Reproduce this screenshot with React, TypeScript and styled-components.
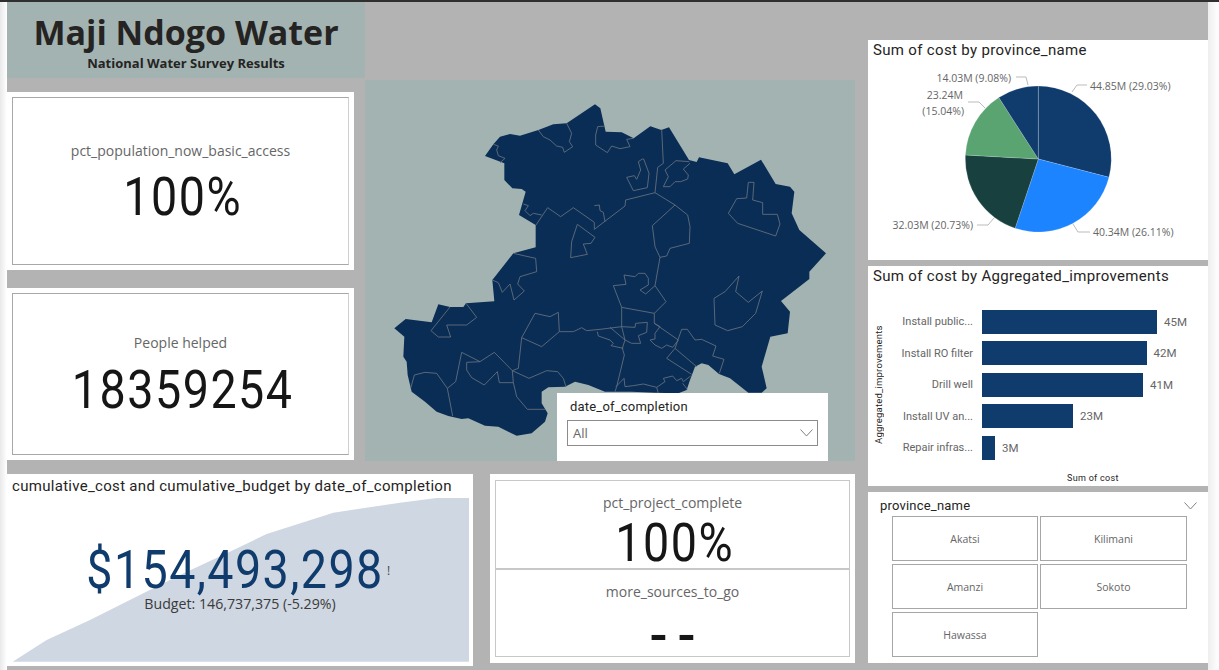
import React from "react"
import styled, { createGlobalStyle } from "styled-components"

const GlobalStyle = createGlobalStyle`
  html, body {
    margin: 0;
    padding: 0;
    background: #fff;
  }
`

const din = `"Roboto", "Liberation Sans", sans-serif`
const segoe = `"Open Sans", "Noto Sans", sans-serif`

const pieData = [
  { pct: 29.03, color: "#0f3b6d" },
  { pct: 26.11, color: "#1c84ff" },
  { pct: 20.73, color: "#18403f" },
  { pct: 15.04, color: "#5aa472" },
  { pct: 9.08, color: "#0f3b6d" },
]

const barData = [
  { label: "Install public...", width: 175, value: "45M" },
  { label: "Install RO filter", width: 164.5, value: "42M" },
  { label: "Drill well", width: 161, value: "41M" },
  { label: "Install UV an...", width: 91, value: "23M" },
  { label: "Repair infras...", width: 13, value: "3M" },
]

const provinces = ["Akatsi", "Kilimani", "Amanzi", "Sokoto", "Hawassa"]

// traced off the reference, units are 1/3 px
const mapOutline =
  "690,73 706,85 722,155 770,157 806,175 856,139 889,150 912,142 972,240 995,246 1002,232 1088,250 1108,283 1188,239 1232,312 1275,320 1288,335 1280,400 1303,450 1383,520 1333,575 1333,597 1248,663 1275,695 1268,760 1216,770 1190,860 1205,925 1190,938 1150,938 1095,895 1062,882 1030,855 1010,850 990,860 975,900 965,930 940,940 870,938 800,935 745,935 720,935 670,915 630,905 600,920 550,922 530,935 530,970 548,1000 540,1025 500,1060 455,1067 430,1055 400,1040 360,1037 310,1015 290,1017 250,1008 215,995 180,965 140,935 128,885 125,845 115,830 118,770 88,745 122,717 200,727 220,673 255,681 295,681 303,670 388,664 382,600 445,520 512,502 512,435 462,405 482,335 470,327 442,325 418,300 418,250 360,228 385,193 405,170 435,162 465,167 520,150 565,133 605,130"

const mapLines = [
  "385,193 400,198 395,210 400,227 420,235 405,248",
  "520,150 535,170 555,180 575,198 593,202 598,217 623,200 613,185 620,160 605,130",
  "720,138 698,140 692,165 692,195 727,218 740,198 765,206 795,200 785,178 806,175",
  "890,148 895,250 878,262 870,338",
  "973,245 933,242 900,270 910,290 895,320 915,320 930,305 947,305 968,297 970,285 955,267 975,250",
  "832,237 820,245 827,270 815,298 808,287 785,292 805,332 847,323 852,280 836,237 832,237",
  "513,435 548,383 587,410 625,383 688,427 688,448 780,378 782,360 870,338",
  "688,377 703,375 705,392 715,397 720,425",
  "475,372 490,377 480,392 495,407 505,400 530,405",
  "637,433 690,472 678,490 655,492 667,523 617,533 620,485 637,433",
  "870,338 930,375 862,437 870,500 885,532 905,528 915,505 973,490 975,440 968,405 930,375",
  "885,532 870,617",
  "1150,307 1167,307 1163,360 1193,368 1193,403 1237,403 1245,432 1232,468 1118,430 1090,400 1115,356 1145,354 1150,307",
  "445,520 512,535 515,575 465,590 458,612 478,633 447,660 435,612 412,637 400,608 382,600",
  "745,617 783,613 777,585 810,590 820,580 840,580 850,595 850,615 825,630 842,642 870,617 903,665 868,700 770,682 745,617",
  "868,700 868,730 940,780",
  "770,682 770,740 780,780 772,805 778,825 755,920 750,935",
  "705,748 770,740 810,742 812,730 847,727 845,757 820,767 827,790 800,790 780,780 735,742",
  "697,755 700,768 735,780 745,790 738,797 775,805",
  "583,755 625,755 650,743 665,752 705,748",
  "510,700 555,710 580,697 583,755 530,800 470,773 510,700",
  "470,773 460,865 442,872",
  "290,817 345,845 388,817 442,872 492,895 545,872 578,875 595,895 603,920",
  "290,817 272,905 247,925 263,1008",
  "345,845 305,847 305,870 320,893 358,915 397,875 403,908 445,908",
  "442,872 445,908 455,950 487,988 540,988",
  "137,925 148,885 180,877 215,880 247,925",
  "255,681 198,752 220,771 257,771 245,735 305,735 335,712 303,670",
  "1122,588 1112,635 1150,667 1192,633 1172,700 1132,740 1088,752 1050,735 1047,655 1080,635 1122,588",
  "868,730 885,740 870,760 870,777 855,780 870,795 890,805 905,795 923,802 940,780",
  "950,748 967,748 990,780 1010,778 1053,798 1043,828 1077,838 1063,880",
  "950,748 930,805 905,835 980,883",
  "930,805 995,860",
  "753,920 777,895 780,920 805,917 835,912 875,922 880,940",
  "875,922 900,905 895,895 923,888 935,902 950,895 955,905 977,888",
  "953,910 967,928",
]

const areaPoints =
  "38,605 140,540 270,480 400,415 540,345 680,280 800,222 1000,158 1200,128 1310,114 1407,114 1407,605"

function wedge(cx: number, cy: number, r: number, from: number, to: number) {
  const a0 = (from / 100) * Math.PI * 2
  const a1 = (to / 100) * Math.PI * 2
  const x0 = cx + r * Math.sin(a0)
  const y0 = cy - r * Math.cos(a0)
  const x1 = cx + r * Math.sin(a1)
  const y1 = cy - r * Math.cos(a1)
  const large = to - from > 50 ? 1 : 0
  return `M${cx},${cy} L${x0},${y0} A${r},${r} 0 ${large} 1 ${x1},${y1} Z`
}

function Chevron() {
  return (
    <svg width="13" height="8" viewBox="0 0 13 8">
      <polyline points="0.5,0.5 6.5,7 12.5,0.5" fill="none" stroke="#808080" strokeWidth="1" />
    </svg>
  )
}

function PieChart() {
  let start = 0
  const wedges = pieData.map((d) => {
    const path = wedge(170.3, 119, 73, start, start + d.pct)
    start += d.pct
    return <path key={start} d={path} fill={d.color} stroke="#fff" strokeOpacity="0.35" strokeWidth="0.5" />
  })

  return (
    <PieSvg viewBox="0 26 340 194">
      {wedges}
      <Leader points="204,52 209,45 219,45" />
      <Leader points="205,184 210,192 222,192" />
      <Leader points="109,185 120,185 126,178" />
      <Leader points="100,62 111,62 117,68" />
      <Leader points="148,37 158,37 160,45" />
      <PieLabel x="222" y="50">44.85M (29.03%)</PieLabel>
      <PieLabel x="225" y="196">40.34M (26.11%)</PieLabel>
      <PieLabel x="105" y="189" textAnchor="end">32.03M (20.73%)</PieLabel>
      <PieLabel x="95" y="59" textAnchor="end">23.24M</PieLabel>
      <PieLabel x="96" y="75" textAnchor="end">(15.04%)</PieLabel>
      <PieLabel x="143" y="42" textAnchor="end">14.03M (9.08%)</PieLabel>
    </PieSvg>
  )
}

export default function App() {
  return (
    <>
      <GlobalStyle />
      <Page>
        <TopBar />
        <Body>
          <Edge $from="#e9e9e9" $width={7} />
          <Canvas>
            <Main>
              <Upper>
                <LeftCol>
                  <TitleBlock>
                    <Title>Maji Ndogo Water</Title>
                    <Subtitle>National Water Survey Results</Subtitle>
                  </TitleBlock>
                  <KpiCard $top={14} $height={178}>
                    <KpiFrame $pad={43}>
                      <KpiLabel>pct_population_now_basic_access</KpiLabel>
                      <KpiValue $gap={12}>100%</KpiValue>
                    </KpiFrame>
                  </KpiCard>
                  <KpiCard $top={18} $height={172}>
                    <KpiFrame $pad={39}>
                      <KpiLabel>People helped</KpiLabel>
                      <KpiValue $gap={13}>18359254</KpiValue>
                    </KpiFrame>
                  </KpiCard>
                </LeftCol>
                <MapPanel>
                  <MapSvg viewBox="0 0 1470 1143">
                    <polygon points={mapOutline} fill="#0a2d55" />
                    {mapLines.map((points) => (
                      <polyline key={points} points={points} fill="none" stroke="#66717d" strokeWidth="2.6" />
                    ))}
                  </MapSvg>
                  <DateSlicer>
                    <SlicerTitle>date_of_completion</SlicerTitle>
                    <Dropdown>
                      <span>All</span>
                      <Chevron />
                    </Dropdown>
                  </DateSlicer>
                </MapPanel>
              </Upper>
              <Lower>
                <CostCard>
                  <CostTitle>cumulative_cost and cumulative_budget by date_of_completion</CostTitle>
                  <AreaSvg viewBox="0 0 1470 630">
                    <polygon points={areaPoints} fill="#cfd7e2" />
                  </AreaSvg>
                  <CostValue>$154,493,298</CostValue>
                  <CostWarn>!</CostWarn>
                  <CostBudget>Budget: 146,737,375 (-5.29%)</CostBudget>
                </CostCard>
                <ProjectCard>
                  <ProjectFrame>
                    <KpiLabel>pct_project_complete</KpiLabel>
                    <KpiValue $gap={6}>100%</KpiValue>
                  </ProjectFrame>
                  <ProjectFrame>
                    <KpiLabel>more_sources_to_go</KpiLabel>
                    <KpiDash>- -</KpiDash>
                  </ProjectFrame>
                </ProjectCard>
              </Lower>
            </Main>
            <Side>
              <ChartCard $height={220}>
                <ChartTitle>Sum of cost by province_name</ChartTitle>
                <PieChart />
              </ChartCard>
              <ChartCard $height={220}>
                <ChartTitle>Sum of cost by Aggregated_improvements</ChartTitle>
                <AxisTitle>Aggregated_improvements</AxisTitle>
                <Bars>
                  {barData.map((b) => (
                    <BarRow key={b.label}>
                      <BarLabel>{b.label}</BarLabel>
                      <Bar style={{ width: b.width }} />
                      <BarValue>{b.value}</BarValue>
                    </BarRow>
                  ))}
                </Bars>
                <XAxisTitle>Sum of cost</XAxisTitle>
              </ChartCard>
              <ProvinceCard>
                <ProvinceHeader>
                  <SlicerTitle>province_name</SlicerTitle>
                  <Chevron />
                </ProvinceHeader>
                <ProvinceGrid>
                  {provinces.map((p) => (
                    <ProvinceButton key={p}>{p}</ProvinceButton>
                  ))}
                </ProvinceGrid>
              </ProvinceCard>
            </Side>
          </Canvas>
          <Edge $from="#eeeeee" $width={11} />
        </Body>
      </Page>
    </>
  )
}

const Page = styled.div`
  width: 1219px;
  height: 670px;
  overflow: hidden;
  display: flex;
  flex-direction: column;
`

const TopBar = styled.div`
  height: 2px;
  background: #2f2f2f;
`

const Body = styled.div`
  flex: 1;
  display: flex;
`

const Edge = styled.div<{ $from: string; $width: number }>`
  width: ${(p) => p.$width}px;
  background: linear-gradient(to right, ${(p) => p.$from}, #fff);
`

const Canvas = styled.div`
  width: 1201px;
  background: #b3b3b3;
  display: flex;
  gap: 13px;
`

const Main = styled.div`
  width: 848px;
  display: flex;
  flex-direction: column;
  gap: 13px;
`

const Upper = styled.div`
  display: flex;
  height: 459px;
`

const LeftCol = styled.div`
  width: 358px;
  display: flex;
  flex-direction: column;
`

const TitleBlock = styled.div`
  height: 76px;
  background: #a3b3b1;
  color: #252423;
  text-align: center;
  font-family: ${segoe};
  font-weight: 700;
`

const Title = styled.div`
  font-size: 34px;
  line-height: 46px;
  padding-top: 7px;
`

const Subtitle = styled.div`
  font-size: 13px;
  line-height: 16px;
`

const KpiCard = styled.div<{ $top: number; $height: number }>`
  width: 347px;
  height: ${(p) => p.$height}px;
  margin-top: ${(p) => p.$top}px;
  background: #fff;
  padding: 5px;
  box-sizing: border-box;
  display: flex;
`

const KpiFrame = styled.div<{ $pad: number }>`
  flex: 1;
  padding-top: ${(p) => p.$pad}px;
  border: 1px solid #a8a8a8;
  border-right-color: #cfcfcf;
  text-align: center;
`

const KpiLabel = styled.div`
  font-family: ${segoe};
  font-size: 14px;
  line-height: 20px;
  color: #666;
`

const KpiValue = styled.div<{ $gap: number }>`
  margin-top: ${(p) => p.$gap}px;
  padding-left: 5px;
  font-family: ${din};
  font-size: 53px;
  line-height: 48px;
  letter-spacing: 1.7px;
  color: #161616;
  transform: scaleX(0.88);
`

const KpiDash = styled.div`
  margin-top: 17px;
  font-family: ${din};
  font-size: 53px;
  font-weight: 500;
  line-height: 34px;
  word-spacing: -3px;
  color: #161616;
`

const MapPanel = styled.div`
  position: relative;
  width: 490px;
  height: 381px;
  margin-top: 78px;
  background: #a3b3b1;
`

const MapSvg = styled.svg`
  display: block;
  width: 490px;
  height: 381px;
`

const DateSlicer = styled.div`
  position: absolute;
  left: 192px;
  top: 313px;
  width: 271px;
  height: 68px;
  box-sizing: border-box;
  padding: 6px 10px 0;
  background: #fff;
`

const SlicerTitle = styled.div`
  font-family: ${din};
  font-size: 13px;
  line-height: 16px;
  letter-spacing: 0.2px;
  padding-left: 3px;
  color: #252423;
`

const Dropdown = styled.div`
  height: 26px;
  margin-top: 5px;
  box-sizing: border-box;
  border: 1px solid #8c8c8c;
  padding: 0 4px 0 5px;
  display: flex;
  align-items: center;
  justify-content: space-between;
  font-family: ${segoe};
  font-size: 13px;
  color: #666;
`

const Lower = styled.div`
  display: flex;
  gap: 17px;
`

const CostCard = styled.div`
  position: relative;
  width: 466px;
  height: 192px;
  background: #fff;
`

const CostTitle = styled.div`
  padding: 3px 0 0 5px;
  font-family: ${din};
  font-size: 15px;
  line-height: 18px;
  letter-spacing: 0.3px;
  color: #252423;
  white-space: nowrap;
`

const AreaSvg = styled.svg`
  position: absolute;
  left: -7px;
  top: -14px;
  width: 490px;
  height: 210px;
`

const CostValue = styled.div`
  position: absolute;
  left: 0;
  width: 456px;
  top: 74px;
  text-align: center;
  font-family: ${din};
  font-size: 53px;
  line-height: 44px;
  color: #0f3b6d;
  letter-spacing: 1.6px;
  transform: scaleX(0.88);
`

const CostWarn = styled.div`
  position: absolute;
  left: 380px;
  top: 88px;
  font-family: ${segoe};
  font-size: 12px;
  color: #444;
`

const CostBudget = styled.div`
  position: absolute;
  left: 0;
  width: 466px;
  top: 120px;
  text-align: center;
  font-family: ${segoe};
  font-size: 14.2px;
  line-height: 20px;
  color: #3a3a3a;
`

const ProjectCard = styled.div`
  width: 365px;
  height: 189px;
  box-sizing: border-box;
  padding: 6px 5px;
  background: #fff;
  display: flex;
  flex-direction: column;
`

const ProjectFrame = styled.div`
  flex: 1;
  box-sizing: border-box;
  padding-top: 12px;
  border: 1px solid #c8c8c8;
  text-align: center;
`

const Side = styled.div`
  width: 340px;
  padding-top: 38px;
  display: flex;
  flex-direction: column;
  gap: 6px;
`

const ChartCard = styled.div<{ $height: number }>`
  position: relative;
  height: ${(p) => p.$height}px;
  background: #fff;
`

const ChartTitle = styled.div`
  height: 26px;
  padding: 1px 0 0 5px;
  box-sizing: border-box;
  font-family: ${din};
  font-size: 15px;
  line-height: 18px;
  letter-spacing: 0.33px;
  color: #252423;
`

const PieSvg = styled.svg`
  display: block;
  width: 340px;
  height: 194px;
`

const PieLabel = styled.text`
  font-family: ${segoe};
  font-size: 10.5px;
  fill: #666;
`

const Leader = styled.polyline`
  fill: none;
  stroke: #bbb;
  stroke-width: 1;
`

const AxisTitle = styled.div`
  position: absolute;
  left: 5px;
  top: 58px;
  height: 122px;
  writing-mode: vertical-rl;
  transform: rotate(180deg);
  text-align: center;
  font-family: ${din};
  font-size: 9.5px;
  line-height: 12px;
  letter-spacing: 0.2px;
  color: #252423;
`

const Bars = styled.div`
  margin-top: 17.5px;
  display: flex;
  flex-direction: column;
  gap: 7.6px;
`

const BarRow = styled.div`
  display: flex;
  align-items: center;
  height: 24px;
`

const BarLabel = styled.div`
  width: 105px;
  text-align: right;
  font-family: ${din};
  font-size: 11px;
  color: #666;
  margin-right: 9px;
`

const Bar = styled.div`
  height: 24px;
  background: #0f3b6d;
`

const BarValue = styled.div`
  margin-left: 7px;
  font-family: ${din};
  font-size: 11.5px;
  color: #666;
`

const XAxisTitle = styled.div`
  margin-top: 12.5px;
  padding-left: 199px;
  font-family: ${din};
  font-size: 9px;
  line-height: 12px;
  letter-spacing: 0.3px;
  color: #252423;
`

const ProvinceCard = styled.div`
  height: 171px;
  background: #fff;
`

const ProvinceHeader = styled.div`
  height: 24px;
  padding: 6px 11px 0 9px;
  box-sizing: border-box;
  display: flex;
  justify-content: space-between;
  align-items: flex-start;

  svg {
    margin-top: 4px;
  }
`

const ProvinceGrid = styled.div`
  margin-left: 24px;
  display: grid;
  grid-template-columns: 146px 147px;
  grid-auto-rows: 44.5px;
  column-gap: 2px;
  row-gap: 3.5px;
`

const ProvinceButton = styled.div`
  box-sizing: border-box;
  border: 1px solid #a6a6a6;
  padding-top: 1px;
  display: flex;
  align-items: center;
  justify-content: center;
  font-family: ${segoe};
  font-size: 10.5px;
  color: #666;
`
